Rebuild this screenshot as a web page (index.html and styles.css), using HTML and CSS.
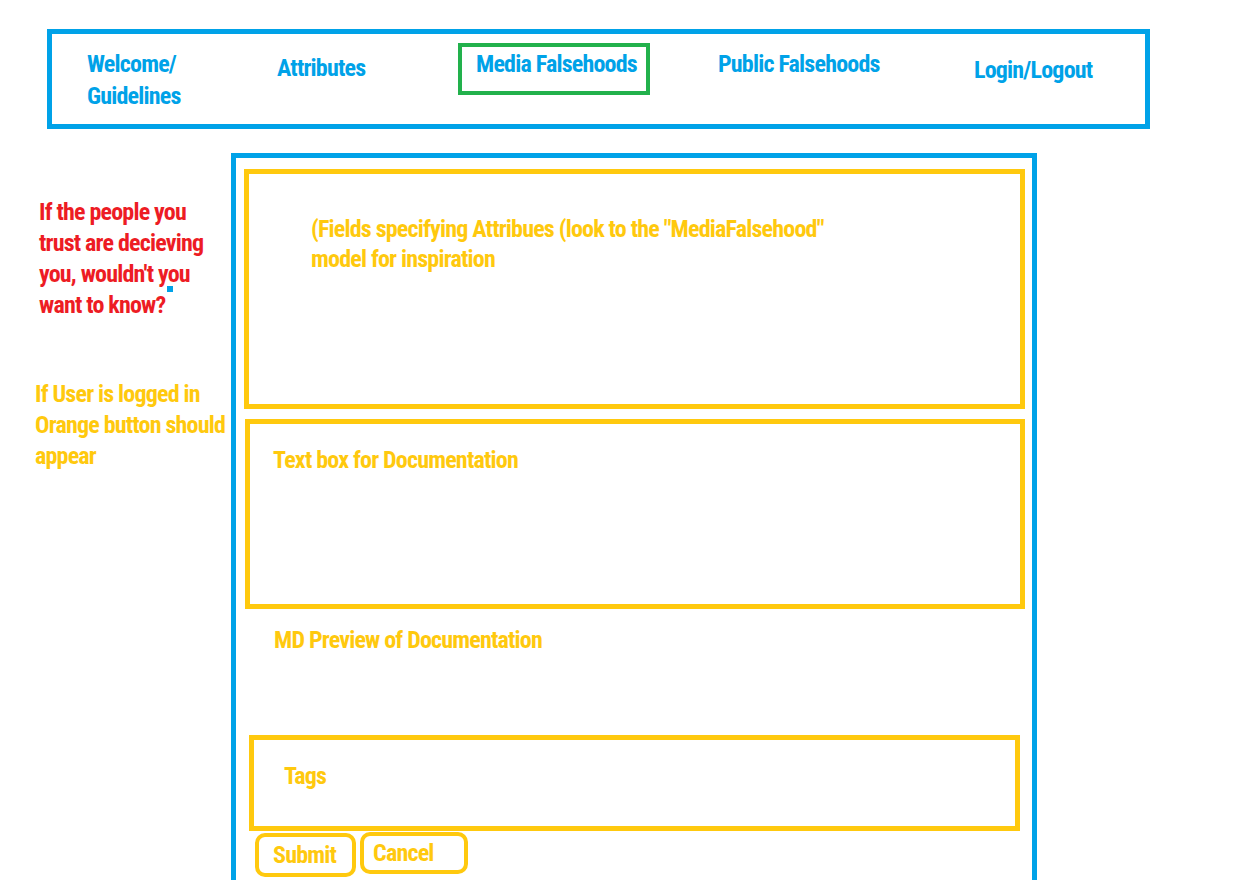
FILE: index.html
```html
<!DOCTYPE html>
<html lang="en">
<head>
<meta charset="utf-8">
<title>Media Falsehoods – Submit</title>
<link rel="stylesheet" href="styles.css">
</head>
<body>
<header class="nav">
  <div class="nav-item nav-welcome">Welcome/<br>Guidelines</div>
  <div class="nav-item nav-attributes">Attributes</div>
  <div class="nav-item nav-active">Media Falsehoods</div>
  <div class="nav-item nav-public">Public Falsehoods</div>
  <div class="nav-item nav-login">Login/Logout</div>
</header>
<div class="content">
  <aside class="notes">
    <p class="note-red">If the people you<br>trust are decieving<br>you, wouldn't you<br>want to know?</p>
    <span class="dot"></span>
    <p class="note-yellow">If User is logged in<br>Orange button should<br>appear</p>
  </aside>
  <main class="panel">
    <section class="box box-fields">
      <p class="fields-text">(Fields specifying Attribues (look to the "MediaFalsehood"<br>model for inspiration</p>
    </section>
    <section class="box box-doc">
      <p class="doc-text">Text box for Documentation</p>
    </section>
    <p class="preview-text">MD Preview of Documentation</p>
    <section class="box box-tags">
      <p class="tags-text">Tags</p>
    </section>
    <div class="actions">
      <div class="btn btn-submit">Submit</div>
      <div class="btn btn-cancel">Cancel</div>
    </div>
  </main>
</div>
</body>
</html>
```
FILE: styles.css
```css
html, body {
  margin: 0;
  height: 880px;
  overflow: hidden;
  background: #ffffff;
}
body {
  font-family: "Roboto Condensed", "Open Sans", "DejaVu Sans Condensed", sans-serif;
  font-stretch: 75%;
  font-weight: bold;
  font-size: 24px;
  letter-spacing: -0.8px;
  line-height: 31px;
}
p { margin: 0; }

.nav {
  box-sizing: border-box;
  margin: 29px 0 0 47px;
  width: 1103px;
  height: 100px;
  border: 5px solid #00a2e8;
  display: grid;
  grid-template-columns: 190px 181px 260px 256px 1fr;
  align-items: start;
  padding-left: 35px;
  color: #00a2e8;
}
.nav-item { white-space: nowrap; }
.nav-welcome { margin-top: 14px; line-height: 32px; }
.nav-attributes { margin-top: 19px; }
.nav-active {
  box-sizing: border-box;
  margin-top: 9px;
  width: 192px;
  height: 52px;
  border: 4px solid #22b14c;
  padding: 2px 0 0 14px;
}
.nav-public { margin-top: 15px; }
.nav-login { margin-top: 21px; }

.content {
  display: flex;
  margin-top: 24px;
}
.notes {
  position: relative;
  width: 231px;
  flex: none;
  box-sizing: border-box;
  padding: 44px 0 0 39px;
  white-space: nowrap;
}
.note-red { color: #ed1c24; }
.note-yellow { color: #ffc90e; margin: 58px 0 0 -4px; }
.dot {
  position: absolute;
  left: 167px;
  top: 133px;
  width: 6px;
  height: 6px;
  background: #00a2e8;
}

.panel {
  box-sizing: border-box;
  width: 806px;
  height: 760px;
  flex: none;
  border: 5px solid #00a2e8;
  display: flex;
  flex-direction: column;
  align-items: flex-start;
  color: #ffc90e;
}
.box {
  box-sizing: border-box;
  border: 5px solid #ffc90e;
}
.box-fields {
  margin: 11px 0 0 8px;
  width: 781px;
  height: 240px;
  padding: 40px 0 0 62px;
  line-height: 30px;
}
.box-doc {
  margin: 10px 0 0 9px;
  width: 780px;
  height: 190px;
  padding: 21px 0 0 23px;
}
.preview-text { margin: 16px 0 0 38px; }
.box-tags {
  margin: 79px 0 0 13px;
  width: 771px;
  height: 96px;
  padding: 21px 0 0 30px;
}
.actions {
  display: flex;
  align-items: flex-start;
  gap: 4px;
  margin: 1px 0 0 19px;
}
.btn {
  box-sizing: border-box;
  border: 4px solid #ffc90e;
  border-radius: 10px;
  display: flex;
  align-items: center;
}
.btn-submit { width: 101px; height: 44px; padding-left: 14px; margin-top: 1px; }
.btn-cancel { width: 108px; height: 42px; padding-left: 9px; }
```
